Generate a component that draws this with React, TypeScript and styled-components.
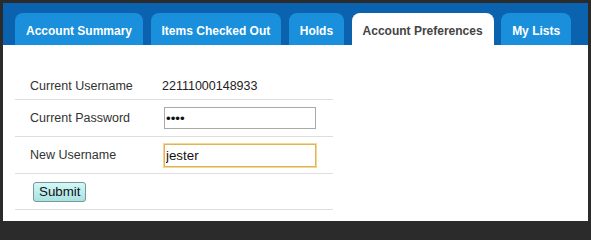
import React from "react";
import styled, { createGlobalStyle } from "styled-components";

const GlobalStyle = createGlobalStyle`
  html, body { margin: 0; padding: 0; background: #2b2b2b; height: 224px; overflow: hidden; }
  * { box-sizing: border-box; }
`;

const Frame = styled.div`
  width: 591px;
  height: 224px;
  border: 3px solid #2b2b2b;
  background: #ffffff;
  display: flex;
  flex-direction: column;
  font-family: "Liberation Sans", Arial, sans-serif;
`;

const TabBar = styled.nav`
  display: flex;
  align-items: flex-end;
  gap: 7.5px;
  padding: 10px 0 0 12px;
  background: #0b63b0;
`;

const Tab = styled.div<{ $active?: boolean }>`
  height: 32px;
  padding: 11px 11px 0;
  border-radius: 8px 8px 0 0;
  font-size: 12px;
  line-height: 14px;
  font-weight: bold;
  white-space: nowrap;
  background: ${(p) => (p.$active ? "#ffffff" : "#1a8fdc")};
  color: ${(p) => (p.$active ? "#444444" : "#ffffff")};
`;

const Body = styled.div`
  flex: 1;
  padding: 28px 0 0 12px;
  background: #ffffff;
`;

const Form = styled.form`
  width: 318px;
  display: flex;
  flex-direction: column;
`;

const Row = styled.div<{ $h: number }>`
  height: ${(p) => p.$h}px;
  display: grid;
  grid-template-columns: 147px 1fr;
  align-items: center;
  border-bottom: 1px solid #dddddd;
`;

const Label = styled.div`
  padding-left: 15px;
  font-size: 12.5px;
  line-height: 14px;
  color: #333333;
`;

const Value = styled.div`
  font-size: 12.5px;
  line-height: 14px;
  color: #222222;
`;

const Input = styled.input<{ $focus?: boolean }>`
  margin-left: 2px;
  width: 152px;
  height: ${(p) => (p.$focus ? 23 : 22)}px;
  padding: 0 1px;
  font-family: "Liberation Sans", Arial, sans-serif;
  font-size: 13.33px;
  color: #111111;
  background: #ffffff;
  border: 1px solid ${(p) => (p.$focus ? "#dfb35a" : "#a9a9a9")};
  box-shadow: ${(p) => (p.$focus ? "0 0 0 1px #f3d890" : "none")};
  outline: none;
`;

const ButtonCell = styled.div`
  grid-column: 1 / span 2;
  padding-left: 18px;
`;

const Button = styled.button`
  height: 20px;
  padding: 0 5px;
  font-family: "Liberation Sans", Arial, sans-serif;
  font-size: 13.33px;
  color: #111111;
  border: 1px solid #7a9696;
  border-radius: 3px;
  background: linear-gradient(#d4f8f8, #a8e2e2);
  cursor: pointer;
`;

const tabs = [
  "Account Summary",
  "Items Checked Out",
  "Holds",
  "Account Preferences",
  "My Lists",
];

export default function App() {
  return (
    <>
      <GlobalStyle />
      <Frame>
        <TabBar>
          {tabs.map((t) => (
            <Tab key={t} $active={t === "Account Preferences"}>
              {t}
            </Tab>
          ))}
        </TabBar>
        <Body>
          <Form onSubmit={(e) => e.preventDefault()}>
            <Row $h={27}>
              <Label>Current Username</Label>
              <Value>22111000148933</Value>
            </Row>
            <Row $h={37}>
              <Label>Current Password</Label>
              <div>
                <Input type="password" defaultValue="1234" readOnly />
              </div>
            </Row>
            <Row $h={37}>
              <Label>New Username</Label>
              <div>
                <Input $focus type="text" defaultValue="jester" />
              </div>
            </Row>
            <Row $h={36}>
              <ButtonCell>
                <Button type="submit">Submit</Button>
              </ButtonCell>
            </Row>
          </Form>
        </Body>
      </Frame>
    </>
  );
}
